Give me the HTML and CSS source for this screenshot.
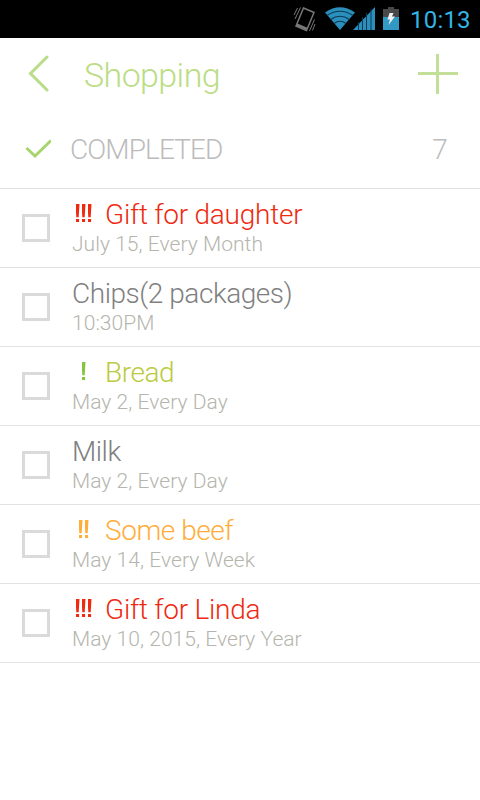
FILE: index.html
```html
<!DOCTYPE html>
<html lang="en">
<head>
    <meta charset="UTF-8">
    <meta name="viewport" content="width=device-width, initial-scale=1.0">
    <title>Shopping</title>
    <link rel="stylesheet" href="styles.css">
</head>
<body>
    <div class="status-bar">
        <svg class="status-icons" width="110" height="38" viewBox="290 0 110 38">
            <!-- Vibrate -->
            <g fill="none" stroke="#777777">
                <path d="M303.500 8 L314 12.500 L306.500 30.500 L296 26 Z" stroke-width="1.500"/>
                <path d="M296.500 24.500 L307 29" stroke-width="2.500"/>
                <path d="M300.500 7.500 L295 19 M297.500 8 L294 15 M309.500 31 L314.500 19.500 M312.500 30.500 L315 24" stroke-width="1"/>
            </g>
            <!-- Wifi -->
            <path d="M325 12.500 Q340 2 355 12.500 L340 30 Z" fill="#2b8fbd"/>
            <path d="M327 15.500 Q340 7 353 15.500 M330.500 19.500 Q340 13 349.500 19.500 M334 23.500 Q340 19 346 23.500" fill="none" stroke="#0c3a50" stroke-width="1.200"/>
            <!-- Signal -->
            <path d="M353 30 L375 7 V30 Z" fill="#2b8fbd"/>
            <path d="M358.500 22 V30 M362.500 17 V30 M366.500 13 V30 M371 9 V30" stroke="#0c3a50" stroke-width="1"/>
            <!-- Battery -->
            <path d="M388 7 H394 V9 H399 V17 H383 V9 H388 Z" fill="#484848"/>
            <path d="M383 17 H399 V30 H383 Z" fill="#3199c4"/>
            <path d="M389.500 13 H393.500 L392 16.500 H395 L388.500 25 L390 19.500 H387.500 Z" fill="#f2f2f2"/>
        </svg>
        <span class="clock">10:13</span>
    </div>
    <div class="header">
        <svg class="back" width="22" height="38" viewBox="0 0 22 38">
            <path d="M19 2 L2.500 18.500 L19 35" fill="none" stroke="#b9dc88" stroke-width="3" stroke-linecap="round"/>
        </svg>
        <h1>Shopping</h1>
        <svg class="add" width="40" height="40" viewBox="0 0 40 40">
            <path d="M0 19.500 H40 M19.500 0 V40" stroke="#c3df98" stroke-width="3"/>
        </svg>
    </div>
    <div class="completed">
        <svg class="check" width="28" height="20" viewBox="0 0 28 20">
            <path d="M3.500 9 L12 17 L28 1.500" fill="none" stroke="#a5d56c" stroke-width="3"/>
        </svg>
        <span class="completed-label">COMPLETED</span>
        <span class="completed-count">7</span>
    </div>
    <ul class="list">
        <li class="item high">
            <span class="checkbox"></span>
            <div class="text">
                <div class="name"><span class="priority"><i></i><i></i><i></i></span><span class="label">Gift for daughter</span></div>
                <div class="date">July 15, Every Month</div>
            </div>
        </li>
        <li class="item">
            <span class="checkbox"></span>
            <div class="text">
                <div class="name"><span class="label">Chips(2 packages)</span></div>
                <div class="date">10:30PM</div>
            </div>
        </li>
        <li class="item low">
            <span class="checkbox"></span>
            <div class="text">
                <div class="name"><span class="priority"><i></i></span><span class="label">Bread</span></div>
                <div class="date">May 2, Every Day</div>
            </div>
        </li>
        <li class="item">
            <span class="checkbox"></span>
            <div class="text">
                <div class="name"><span class="label">Milk</span></div>
                <div class="date">May 2, Every Day</div>
            </div>
        </li>
        <li class="item medium">
            <span class="checkbox"></span>
            <div class="text">
                <div class="name"><span class="priority"><i></i><i></i></span><span class="label">Some beef</span></div>
                <div class="date">May 14, Every Week</div>
            </div>
        </li>
        <li class="item high">
            <span class="checkbox"></span>
            <div class="text">
                <div class="name"><span class="priority"><i></i><i></i><i></i></span><span class="label">Gift for Linda</span></div>
                <div class="date">May 10, 2015, Every Year</div>
            </div>
        </li>
    </ul>
</body>
</html>
```
FILE: styles.css
```css
body {
    font-family: Roboto, sans-serif;
    font-weight: 300;
    background-color: #FFFFFF;
    margin: 0;
    padding: 0;
}
.status-bar {
    background-color: #000000;
    height: 38px;
    display: flex;
    align-items: center;
    justify-content: flex-end;
    padding-right: 9px;
}
.clock {
    width: 61px;
    margin-left: 10px;
    padding-top: 2px;
    font-size: 24px;
    font-weight: 400;
    line-height: 38px;
    letter-spacing: 0.2px;
    color: #33B5E5; /* Holo blue */
}
.header {
    height: 72px;
    display: flex;
    align-items: center;
    padding: 0 22px 0 28px;
}
.header h1 {
    flex: 1;
    margin: 0 0 0 34px;
    padding-top: 2px;
    font-size: 34px;
    font-weight: 300;
    line-height: 72px;
    letter-spacing: -0.6px;
    color: #BBDD85; /* Light green */
}
.completed {
    height: 78px;
    display: flex;
    align-items: center;
    padding: 0 33px 0 23px;
    font-size: 28px;
    font-weight: 300;
    letter-spacing: -0.9px;
    color: #BCBCBC;
}
.completed-label {
    flex: 1;
    margin-left: 19px;
}
.list {
    list-style: none;
    margin: 0;
    padding: 0;
    border-top: 1px solid #E2E2E2;
}
.item {
    height: 78px;
    display: flex;
    align-items: center;
    padding-left: 22px;
    border-bottom: 1px solid #E2E2E2;
    color: #808080;
}
.checkbox {
    width: 22px;
    height: 22px;
    border: 3px solid #DADADA;
}
.text {
    margin-left: 22px;
}
.name {
    display: flex;
    height: 32px;
    font-size: 28px;
    line-height: 32px;
    letter-spacing: -0.45px;
}
.date {
    height: 26px;
    font-size: 21px;
    line-height: 26px;
    letter-spacing: 0.05px;
    color: #B5B5AD;
}
.high .name {
    letter-spacing: -0.25px;
}
.priority {
    display: flex;
    justify-content: center;
    gap: 2px;
    width: 23px;
    margin-right: 10px;
    padding-top: 5px;
}
/* One exclamation mark: tapered bar with a dot under it */
.priority i {
    width: 4px;
    height: 18px;
    background-color: currentColor;
    clip-path: polygon(0 0, 100% 0, 80% 74%, 50% 74%, 50% 83%, 90% 83%, 90% 100%, 10% 100%, 10% 83%, 50% 83%, 50% 74%, 20% 74%);
}
.high {
    color: #EE2A10; /* Red */
}
.medium {
    color: #FFAD3B; /* Orange */
}
.low {
    color: #BBCA40; /* Green */
}
.low .priority {
    color: #84C440;
}
```
